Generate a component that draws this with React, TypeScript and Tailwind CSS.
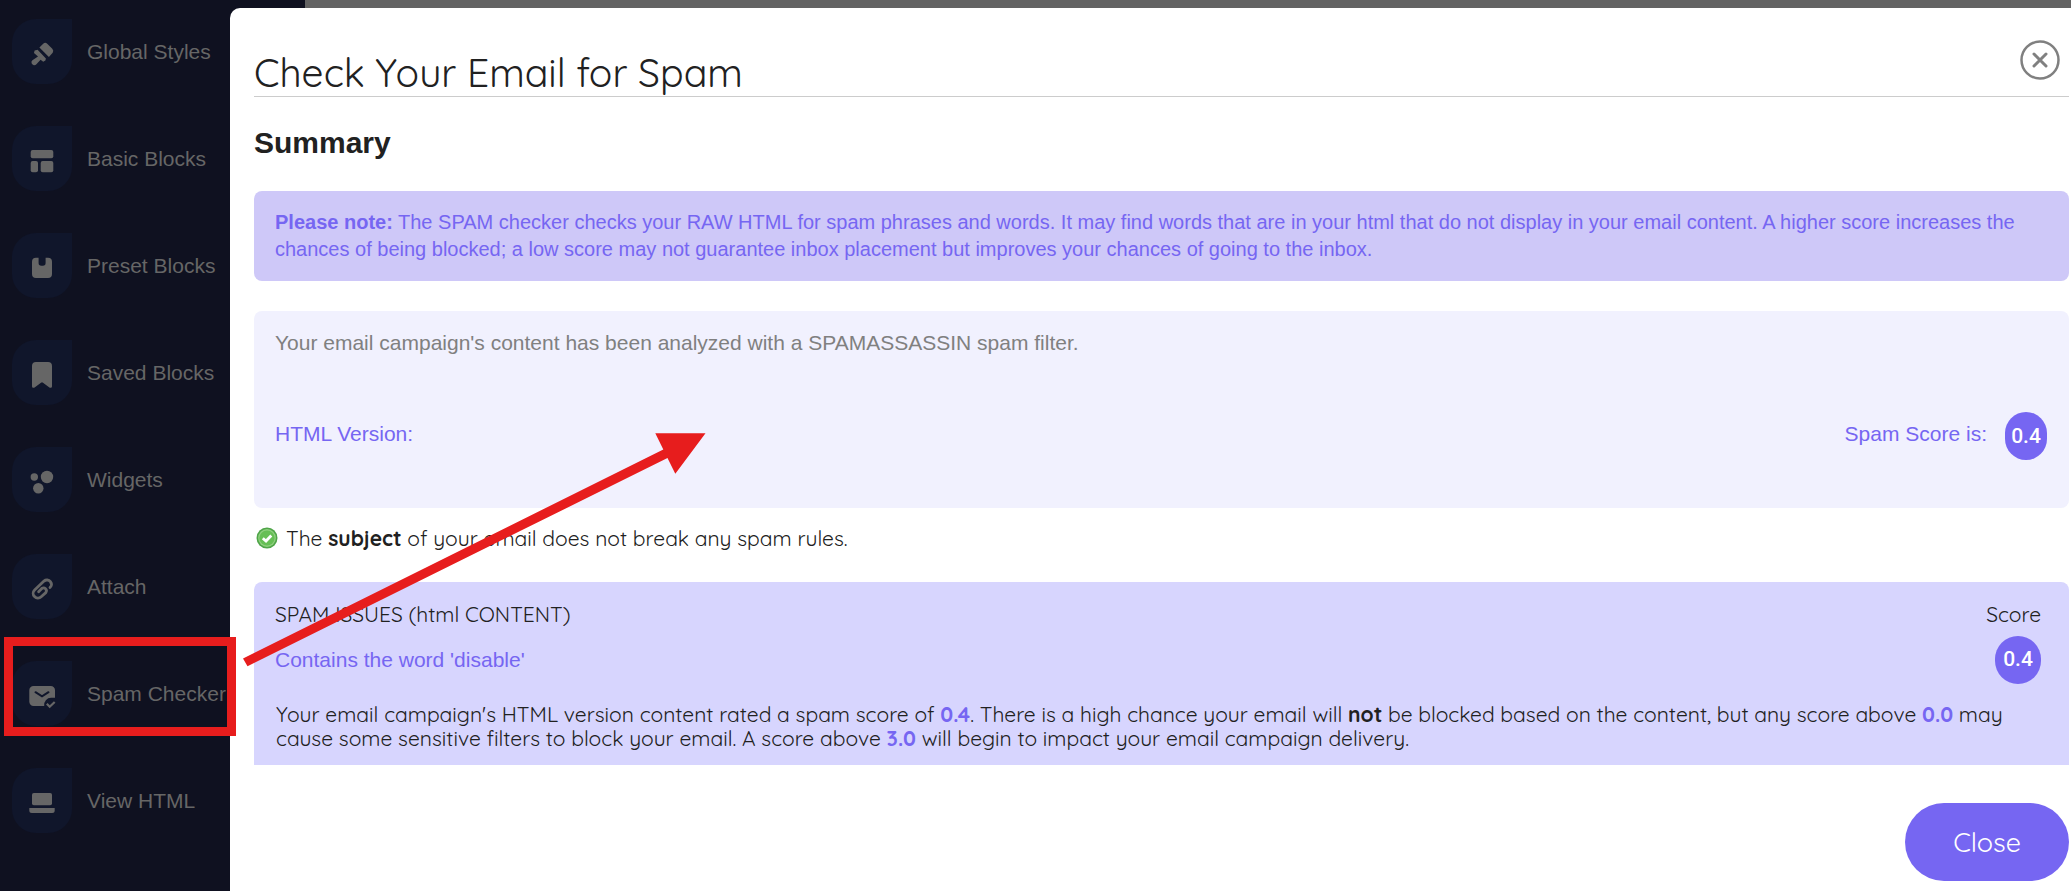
import type { ReactNode } from 'react';
import clsx from 'clsx';

const arial = "font-['Liberation_Sans',Arial,sans-serif]";
const rounded = "font-['Quicksand','Lato',sans-serif]";

interface MenuItem {
  label: string;
  icon: ReactNode;
}

const menu: MenuItem[] = [
  {
    label: 'Global Styles',
    icon: (
      <>
        <path d="M31.2 24.7a2.8 2.8 0 0 1 4 0l5.1 5.1a3.3 3.3 0 0 1 .4 4L36.9 38 27.4 28.6z" />
        <path d="M25.6 30.8 33.9 39.4 33.4 41.6 31.2 42.8 28.6 40.7 24.4 45.2a2.8 2.8 0 0 1-4.7-.6 2.8 2.8 0 0 1 .7-3.3L26 37.5 22 33.9 22.6 31.4z" />
      </>
    ),
  },
  {
    label: 'Basic Blocks',
    icon: (
      <>
        <rect x="18.7" y="24" width="22.6" height="8.3" rx="2" />
        <rect x="18.7" y="35" width="7.3" height="11.3" rx="2" />
        <rect x="28.7" y="35" width="12.6" height="11.3" rx="2" />
      </>
    ),
  },
  {
    label: 'Preset Blocks',
    icon: (
      <path d="M24 24.7h2.6v5.3a2.7 2.7 0 0 0 2.7 2.7h1.6a2.7 2.7 0 0 0 2.7-2.7v-5.3H36a4 4 0 0 1 4 4V41a4 4 0 0 1-4 4H24a4 4 0 0 1-4-4V28.7a4 4 0 0 1 4-4z" />
    ),
  },
  {
    label: 'Saved Blocks',
    icon: (
      <path d="M24 22h12a4 4 0 0 1 4 4v20.2a1.6 1.6 0 0 1-2.6 1.3L31 42.7a1.6 1.6 0 0 0-2 0l-6.4 4.8A1.6 1.6 0 0 1 20 46.2V26a4 4 0 0 1 4-4z" />
    ),
  },
  {
    label: 'Widgets',
    icon: (
      <>
        <circle cx="22.3" cy="30" r="3.7" />
        <circle cx="35" cy="30" r="6.2" />
        <circle cx="26.3" cy="41.2" r="5.2" />
      </>
    ),
  },
  {
    label: 'Attach',
    icon: (
      <path
        d="M38 33.5a4.4 4.4 0 0 0 .4-5.8 4.4 4.4 0 0 0-6.4-.6L22.6 35.9a4.7 4.7 0 0 0 6.6 6.8L33.8 38.6a2.9 2.9 0 0 0-4-4.1L26.6 37.8"
        fill="none"
        stroke="currentColor"
        strokeWidth="2.8"
        strokeLinecap="round"
        strokeLinejoin="round"
      />
    ),
  },
  {
    label: 'Spam Checker',
    icon: (
      <>
        <path d="M21.5 25h17.3a4.2 4.2 0 0 1 4.2 4.2v7.6h-3.5a7 7 0 0 0-7.3 8.2H21.5a4.2 4.2 0 0 1-4.2-4.2V29.2a4.2 4.2 0 0 1 4.2-4.2z" />
        <path
          d="M23.5 31.2 30 35.3 36.5 31.2"
          fill="none"
          stroke="#10162b"
          strokeWidth="2"
          strokeLinecap="round"
        />
        <path d="M34.8 42.8 37.7 45.7 42.7 41" fill="none" stroke="currentColor" strokeWidth="2.2" />
      </>
    ),
  },
  {
    label: 'View HTML',
    icon: (
      <>
        <rect x="20" y="25" width="20" height="12.3" rx="1.8" />
        <path d="M17.3 40h25.4v2.5a2.5 2.5 0 0 1-2.5 2.5H19.8a2.5 2.5 0 0 1-2.5-2.5z" />
      </>
    ),
  },
];

function Sidebar() {
  return (
    <nav className={clsx(arial, 'min-h-screen bg-[#0f1120] pt-[19px] pl-3')}>
      <ul className="flex flex-col gap-[42px]">
        {menu.map((item) => (
          <li key={item.label}>
            <a href="#" className="flex items-center gap-[15px] text-[21px] text-[#666666]">
              <span className="h-[65px] w-[60px] shrink-0 rounded-[24px] rounded-tr-none bg-[#10162b]">
                <svg viewBox="0 0 60 65" className="h-full w-full" fill="currentColor" aria-hidden="true">
                  {item.icon}
                </svg>
              </span>
              <span className="whitespace-nowrap">{item.label}</span>
            </a>
          </li>
        ))}
      </ul>
    </nav>
  );
}

function SuccessIcon() {
  return (
    <svg viewBox="0 0 22 22" className="size-[22px] shrink-0" aria-hidden="true">
      <circle cx="11" cy="11" r="10.5" fill="#4fa548" />
      <circle cx="11" cy="11" r="8.9" fill="#8fd07f" />
      <circle cx="11" cy="11" r="7.6" fill="#66bf55" />
      <path d="M6.8 11.2 10 14 15.3 8.5" fill="none" stroke="#fff" strokeWidth="2.8" />
    </svg>
  );
}

function ScoreBadge({ value, className }: { value: string; className: string }) {
  return (
    <span
      className={clsx(
        "grid h-12 place-items-center rounded-full bg-[#7666f2] font-['Roboto',sans-serif] text-[21px] font-medium text-white",
        className
      )}
    >
      {value}
    </span>
  );
}

function Dialog() {
  return (
    <div role="dialog" aria-labelledby="dialog-title" className="flex-1 rounded-tl-[10px] bg-white pt-8 pr-[2px] pb-[10px] pl-6">
      <header className="flex h-[57px] items-start justify-between border-b border-[#cccccc]">
        <h1 id="dialog-title" className={clsx(rounded, 'pt-2 text-[39px] leading-[50px] font-normal text-[#212121]')}>
          Check Your Email for Spam
        </h1>
        <button type="button" aria-label="Close dialog" className="mr-[9px] size-10">
          <svg viewBox="0 0 40 40" className="size-10" fill="none" stroke="#808080" aria-hidden="true">
            <circle cx="20" cy="20" r="18.5" strokeWidth="2.5" />
            <path d="M14 14 26 26M26 14 14 26" strokeWidth="3" strokeLinecap="round" />
          </svg>
        </button>
      </header>

      <h2 className={clsx(arial, 'mt-7 text-[30px] leading-9 font-bold text-[#212121]')}>Summary</h2>

      <p className={clsx(arial, 'mt-[30px] rounded-lg bg-[#cec8f8] px-[21px] py-[18px] text-[20px] leading-[27px] text-[#7666f2]')}>
        <strong>Please note:</strong> The SPAM checker checks your RAW HTML for spam phrases and words. It may find
        words that are in your html that do not display in your email content. A higher score increases the chances of
        being blocked; a low score may not guarantee inbox placement but improves your chances of going to the inbox.
      </p>

      <section className={clsx(arial, 'mt-[30px] rounded-lg bg-[#f1f1fe] px-[21px] pt-[18px] pb-12 text-[21px] leading-[28px]')}>
        <p className="text-[#808080]">Your email campaign's content has been analyzed with a SPAMASSASSIN spam filter.</p>
        <div className="mt-[55px] flex items-center justify-between pr-[1px] text-[#7666f2]">
          <p className="pb-1">HTML Version:</p>
          <p className="flex items-center gap-[18px]">
            <span className="pb-1">Spam Score is:</span>
            <ScoreBadge value="0.4" className="w-[42px]" />
          </p>
        </div>
      </section>

      <p className={clsx(rounded, 'mt-4 flex items-center gap-2 pl-[2px] text-[21px] leading-[28px] text-[#212121]')}>
        <SuccessIcon />
        <span>
          The <strong>subject</strong> of your email does not break any spam rules.
        </span>
      </p>

      <section className={clsx(rounded, 'mt-[30px] rounded-t-lg bg-[#d7d5fe] px-[21px] pt-[18px] pb-[15px] text-[21px] text-[#212121]')}>
        <table className="w-full">
          <thead>
            <tr className="leading-[28px]">
              <th className="text-left font-normal">SPAM ISSUES (html CONTENT)</th>
              <th className="pr-[7px] text-right font-normal">Score</th>
            </tr>
          </thead>
          <tbody>
            <tr>
              <td className={clsx(arial, 'py-2 align-middle text-[#7666f2]')}>Contains the word 'disable'</td>
              <td className="py-2 pr-[7px]">
                <ScoreBadge value="0.4" className="ml-auto w-[46px]" />
              </td>
            </tr>
          </tbody>
        </table>
        <p className="mt-[10px] pl-px leading-6">
          Your email campaign's HTML version content rated a spam score of <b className="text-[#7666f2]">0.4</b>. There
          is a high chance your email will <b>not</b> be blocked based on the content, but any score above{' '}
          <b className="text-[#7666f2]">0.0</b> may cause some sensitive filters to block your email. A score above{' '}
          <b className="text-[#7666f2]">3.0</b> will begin to impact your email campaign delivery.
        </p>
      </section>

      <footer className="mt-[38px] flex justify-end">
        <button type="button" className={clsx(rounded, 'rounded-full bg-[#7666f2] px-12 py-6 text-[27px] leading-[30px] text-white')}>
          Close
        </button>
      </footer>
    </div>
  );
}

export default function App() {
  return (
    <div className="relative grid min-h-screen grid-cols-[230px_1fr] overflow-hidden bg-[linear-gradient(to_right,#0f1120_305px,#636363_305px)]">
      <Sidebar />
      <div className="flex pt-2">
        <Dialog />
      </div>

      {/* Callout frame and arrow */}
      <div className="pointer-events-none absolute top-[637px] left-1 h-[99px] w-[232px] border-[9px] border-[#e71d1d]" />
      <svg className="pointer-events-none absolute top-[430px] left-[240px] h-[240px] w-[470px]" viewBox="240 430 470 240" fill="#e71d1d" aria-hidden="true">
        <path d="M243 658.5 663.3 449.5 655.3 433.3 705.5 433.3 675.3 473.7 667.5 458 247.5 666.3z" />
      </svg>
    </div>
  );
}
